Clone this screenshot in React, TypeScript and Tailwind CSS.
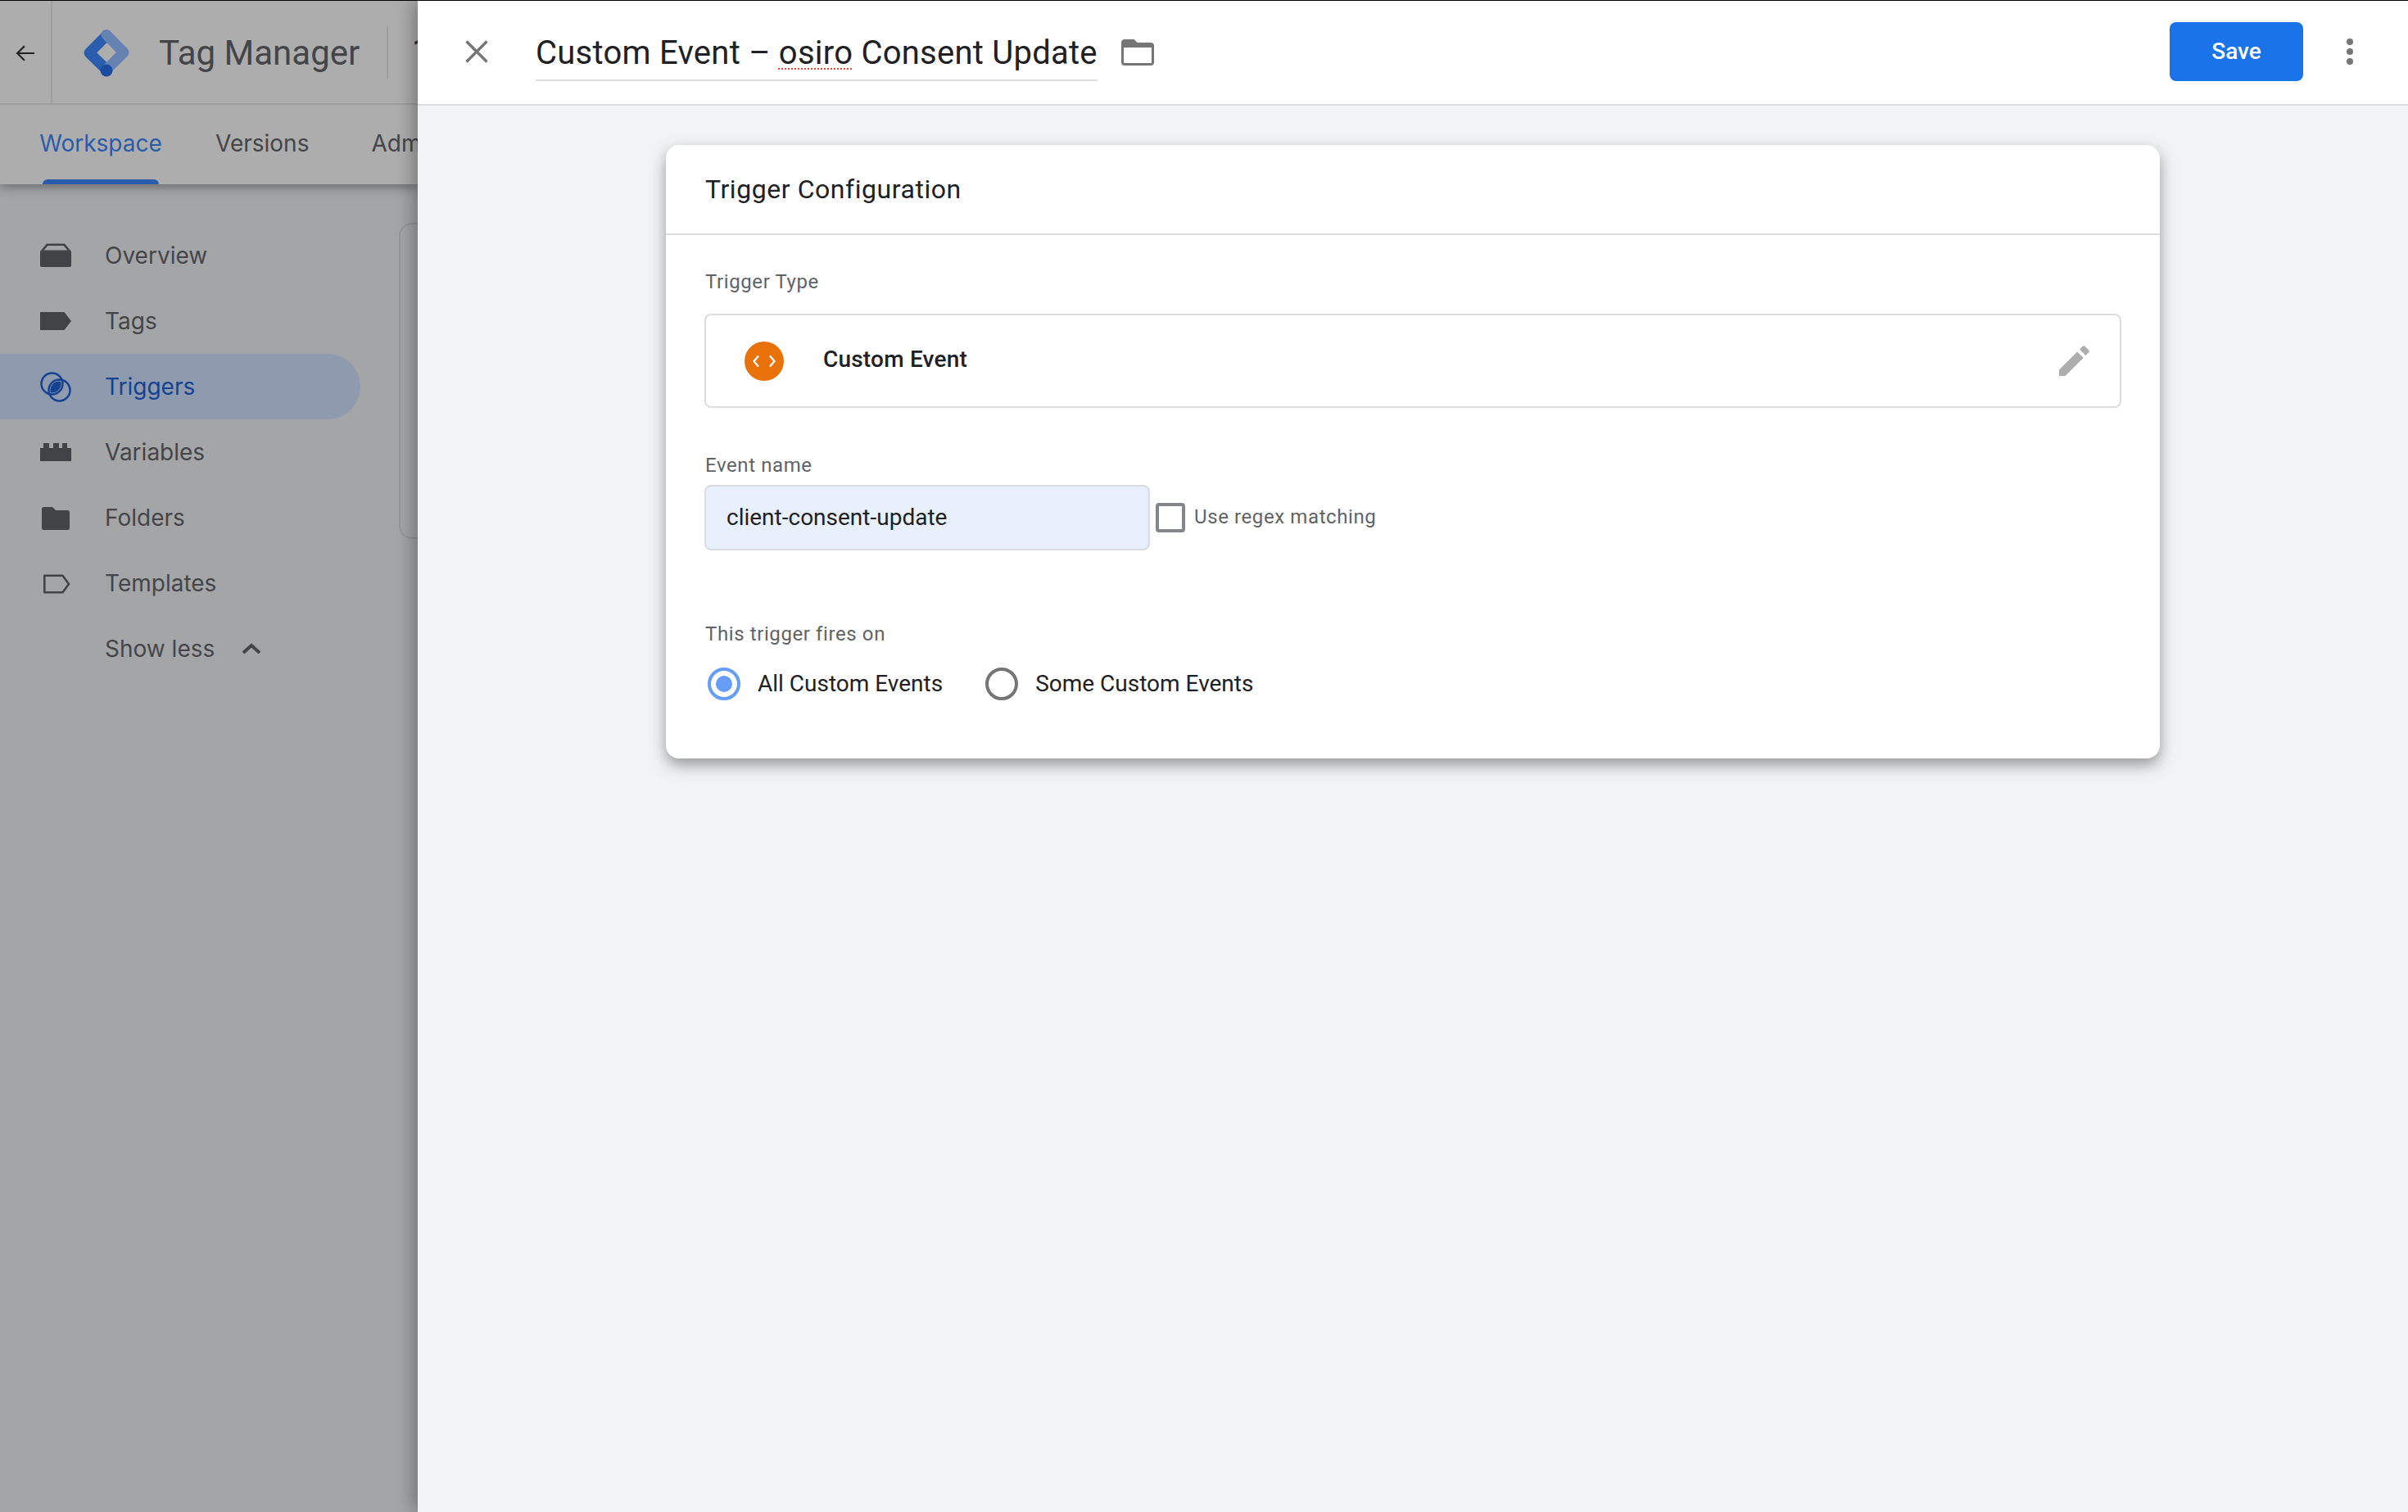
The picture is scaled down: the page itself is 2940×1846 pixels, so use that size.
import type { ReactNode } from "react";

const navItems = [
  { label: "Overview", icon: <OverviewIcon /> },
  { label: "Tags", icon: <TagIcon /> },
  { label: "Triggers", icon: <TriggerIcon />, active: true },
  { label: "Variables", icon: <VariableIcon /> },
  { label: "Folders", icon: <FolderIcon /> },
  { label: "Templates", icon: <TemplateIcon /> },
];

function Icon({ children, className = "" }: { children: ReactNode; className?: string }) {
  return (
    <svg viewBox="0 0 38 38" className={`h-[38px] w-[38px] shrink-0 ${className}`}>
      {children}
    </svg>
  );
}

function OverviewIcon() {
  return (
    <Icon className="text-[#424346]">
      <path fill="currentColor" d="M8 4.5H30L38 14V31a2 2 0 0 1-2 2H2a2 2 0 0 1-2-2V14Z" />
      <path fill="#a4a5a7" d="M9.5 7H28.5L33.5 12.5H4.5Z" />
    </Icon>
  );
}

function TagIcon() {
  return (
    <Icon className="text-[#424346]">
      <path fill="currentColor" d="M0 8H29.5L38 19L29.5 30H0Z" />
    </Icon>
  );
}

function TriggerIcon() {
  return (
    <Icon className="text-[#174291]">
      <defs>
        <clipPath id="lens">
          <circle cx="14.5" cy="15.5" r="11" />
        </clipPath>
      </defs>
      <circle cx="14.5" cy="15.5" r="13" fill="none" stroke="currentColor" strokeWidth="2.5" />
      <circle cx="23.5" cy="23.5" r="13" fill="none" stroke="currentColor" strokeWidth="2.5" />
      <circle cx="23.5" cy="23.5" r="11" fill="currentColor" clipPath="url(#lens)" />
    </Icon>
  );
}

function VariableIcon() {
  return (
    <Icon className="text-[#424346]">
      <path
        fill="currentColor"
        d="M0 14H4V8H11V14H16V8H23V14H27V8H33V14H38V30H0Z"
      />
    </Icon>
  );
}

function FolderIcon() {
  return (
    <Icon className="text-[#424346]">
      <path
        fill="currentColor"
        d="M4.5 6H15L19 10H33.5A2.5 2.5 0 0 1 36 12.5V31.5A2.5 2.5 0 0 1 33.5 34H4.5A2.5 2.5 0 0 1 2 31.5V8.5A2.5 2.5 0 0 1 4.5 6Z"
      />
    </Icon>
  );
}

function TemplateIcon() {
  return (
    <Icon className="text-[#424346]">
      <path
        fill="none"
        stroke="currentColor"
        strokeWidth="2.6"
        strokeLinejoin="round"
        d="M5.3 9.8H27.5L35 20L27.5 30.2H5.3Z"
      />
    </Icon>
  );
}

function Logo() {
  return (
    <svg viewBox="0 0 58 60" className="h-[60px] w-[58px] shrink-0">
      <path
        d="M29 9.5 8 30.5 29 51"
        fill="none"
        stroke="#2a5dae"
        strokeWidth="13"
        strokeLinecap="round"
        strokeLinejoin="round"
      />
      <path
        d="M29 8.5 50 30 29 51"
        fill="none"
        stroke="#6682b2"
        strokeWidth="13"
        strokeLinecap="round"
        strokeLinejoin="round"
      />
      <circle cx="29" cy="52" r="7.5" fill="#1a4d9f" />
    </svg>
  );
}

function LeftPanel() {
  return (
    <aside className="flex w-[510px] shrink-0 flex-col overflow-hidden bg-[#a4a5a7] [font-family:Inter,sans-serif] text-[#444548]">
      <header className="z-10 bg-[#adadad] shadow-[0_4px_12px_rgba(0,0,0,0.35)]">
        <div className="flex h-[127px] items-center border-b-2 border-[#9e9e9e]">
          <div className="flex h-full w-[64px] shrink-0 items-center justify-center border-r-2 border-[#9e9e9e] pt-[3px]">
            <svg viewBox="0 0 22 22" className="h-[24px] w-[24px] text-[#222]">
              <path d="M21 11H2M10 3 2 11l8 8" fill="none" stroke="currentColor" strokeWidth="2" />
            </svg>
          </div>
          <div className="ml-[37px] flex items-center">
            <Logo />
            <span className="mt-[3px] ml-[35px] whitespace-nowrap [font-family:Roboto,sans-serif] text-[42px] leading-none">
              Tag Manager
            </span>
            <span className="ml-[33px] h-[64px] w-[2px] bg-[#9e9e9e]" />
            <span className="ml-[28px] [font-family:Roboto,sans-serif] text-[48px] leading-none text-[#333]">1</span>
          </div>
        </div>
        <nav className="flex h-[97px] items-stretch pl-[48px] text-[28px]">
          <div className="relative flex w-[150px] shrink-0 items-center justify-center pb-[4px] text-[#2b5cab]">
            Workspace
            <span className="absolute bottom-0 left-[4px] h-[6px] w-[142px] rounded-t-md bg-[#2b5cab]" />
          </div>
          <div className="ml-[65px] flex shrink-0 items-center pb-[4px]">Versions</div>
          <div className="ml-[76px] flex shrink-0 items-center whitespace-nowrap pb-[4px]">Admin</div>
        </nav>
      </header>
      <div className="flex flex-1 overflow-hidden">
        <ul className="w-[487px] shrink-0 pt-[47px] text-[28px]">
          {navItems.map((item) => (
            <li
              key={item.label}
              className={`flex h-[80px] w-[440px] items-center gap-[41px] rounded-r-full pl-[49px] ${
                item.active ? "bg-[#8e9aae] text-[#174291]" : ""
              }`}
            >
              {item.icon}
              {item.label}
            </li>
          ))}
          <li className="flex h-[80px] items-center pl-[128px]">
            <span className="w-[167px]">Show less</span>
            <svg viewBox="0 0 24 14" className="h-[14px] w-[24px]">
              <path d="M2 12 12 3l10 9" fill="none" stroke="currentColor" strokeWidth="4" />
            </svg>
          </li>
        </ul>
        <div className="mt-[47px] h-[386px] flex-1 rounded-l-2xl border-2 border-r-0 border-[#96979a]" />
      </div>
    </aside>
  );
}

function TopBar() {
  return (
    <header className="flex h-[128px] shrink-0 items-center border-b-2 border-[#dadce0] bg-white pb-[2px]">
      <svg viewBox="0 0 28 28" className="ml-[58px] h-[28px] w-[28px]">
        <path d="M1.5 1.5 26.5 26.5M26.5 1.5 1.5 26.5" stroke="#757575" strokeWidth="3.4" fill="none" />
      </svg>
      <div className="mt-[2px] ml-[58px] flex h-[70px] items-center border-b-2 border-[#dadce0] pt-[3px] [font-family:Roboto,sans-serif] text-[40px] leading-none tracking-[0.25px] whitespace-nowrap text-[#202124]">
        <span>
          Custom Event –{" "}
          <span className="underline decoration-[#ea4335] decoration-dotted decoration-2 underline-offset-[6px]">
            osiro
          </span>{" "}
          Consent Update
        </span>
      </div>
      <svg viewBox="0 0 40 32" className="mt-[2px] ml-[29px] h-[32px] w-[40px]">
        <path
          d="M4 1.5H15L19 5.5H36A2.5 2.5 0 0 1 38.5 8V28A2.5 2.5 0 0 1 36 30.5H4A2.5 2.5 0 0 1 1.5 28V4A2.5 2.5 0 0 1 4 1.5Z"
          fill="none"
          stroke="#757575"
          strokeWidth="3"
        />
        <path d="M2 3H15L19 7H38V10H2Z" fill="#757575" />
      </svg>
      <button className="ml-auto h-[72px] w-[163px] rounded-lg bg-[#1a73e8] [font-family:Roboto,sans-serif] text-[28px] font-medium text-white">
        Save
      </button>
      <div className="mr-[67px] ml-[53px] flex w-[8px] flex-col gap-[4px]">
        <span className="h-[8px] w-[8px] rounded-full bg-[#757575]" />
        <span className="h-[8px] w-[8px] rounded-full bg-[#757575]" />
        <span className="h-[8px] w-[8px] rounded-full bg-[#757575]" />
      </div>
    </header>
  );
}

function FieldLabel({ children, className = "" }: { children: ReactNode; className?: string }) {
  return (
    <p className={`ml-[1px] text-[24px] leading-[32px] tracking-[0.6px] text-[#5f6368] ${className}`}>{children}</p>
  );
}

function Radio({ checked, label }: { checked?: boolean; label: string }) {
  return (
    <label className="flex items-center gap-[21px] text-[28px] text-[#202124]">
      <span
        className={`flex h-[40px] w-[40px] items-center justify-center rounded-full border-4 ${
          checked ? "border-[#669df6]" : "border-[#757575]"
        }`}
      >
        {checked && <span className="h-[20px] w-[20px] rounded-full bg-[#669df6]" />}
      </span>
      {label}
    </label>
  );
}

function TriggerCard() {
  return (
    <section className="mx-auto mt-[48px] w-[1824px] rounded-2xl bg-white [font-family:Roboto,sans-serif] shadow-[0_8px_18px_rgba(60,64,67,0.5)]">
      <h2 className="flex h-[110px] items-center border-b-2 border-[#dadce0] pl-[48px] text-[32px] tracking-[0.55px] text-[#202124]">
        Trigger Configuration
      </h2>
      <div className="px-[47px] pt-[41px] pb-[70px]">
        <FieldLabel>Trigger Type</FieldLabel>
        <div className="mt-[23px] flex h-[115px] items-center rounded-lg border-2 border-[#dadce0] pr-[32px] pl-[47px]">
          <span className="flex h-[48px] w-[48px] items-center justify-center rounded-full bg-[#e8710a]">
            <svg viewBox="0 0 28 16" className="h-[16px] w-[28px]">
              <path d="M7 1.5 1.5 8 7 14.5M21 1.5 26.5 8 21 14.5" fill="none" stroke="#fff" strokeWidth="2.4" />
            </svg>
          </span>
          <span className="mb-[3px] ml-[48px] text-[28px] font-medium tracking-[0.2px] text-[#202124]">Custom Event</span>
          <svg viewBox="0 0 24 24" className="ml-auto h-[48px] w-[48px] fill-[#adadad]">
            <path d="M3 17.25V21h3.75L17.81 9.94l-3.75-3.75L3 17.25z" />
            <path
              transform="translate(.4 -.4)"
              d="M20.71 7.04c.39-.39.39-1.02 0-1.41l-2.34-2.34c-.39-.39-1.02-.39-1.41 0l-1.83 1.83 3.75 3.75 1.83-1.83z"
            />
          </svg>
        </div>
        <FieldLabel className="mt-[54px]">Event name</FieldLabel>
        <div className="mt-[8px] flex items-center">
          <div className="flex h-[80px] w-[544px] items-center rounded-lg border-2 border-[#dadce0] bg-[#e8f0fe] pl-[25px] text-[28px] text-[#202124]">
            client-consent-update
          </div>
          <span className="ml-[7px] h-[36px] w-[36px] rounded-[4px] border-4 border-[#80868b]" />
          <span className="mb-[2px] ml-[11px] text-[24px] tracking-[0.6px] text-[#5f6368]">Use regex matching</span>
        </div>
        <FieldLabel className="mt-[86px]">This trigger fires on</FieldLabel>
        <div className="mt-[24px] flex gap-[52px] pl-[4px]">
          <Radio checked label="All Custom Events" />
          <Radio label="Some Custom Events" />
        </div>
      </div>
    </section>
  );
}

export default function App() {
  return (
    <div className="flex h-[1846px] w-[2940px] overflow-hidden border-t border-black">
      <LeftPanel />
      <main className="z-20 flex flex-1 flex-col bg-[#f1f3f4] shadow-[-6px_0_20px_rgba(0,0,0,0.3)]">
        <TopBar />
        <TriggerCard />
      </main>
    </div>
  );
}
